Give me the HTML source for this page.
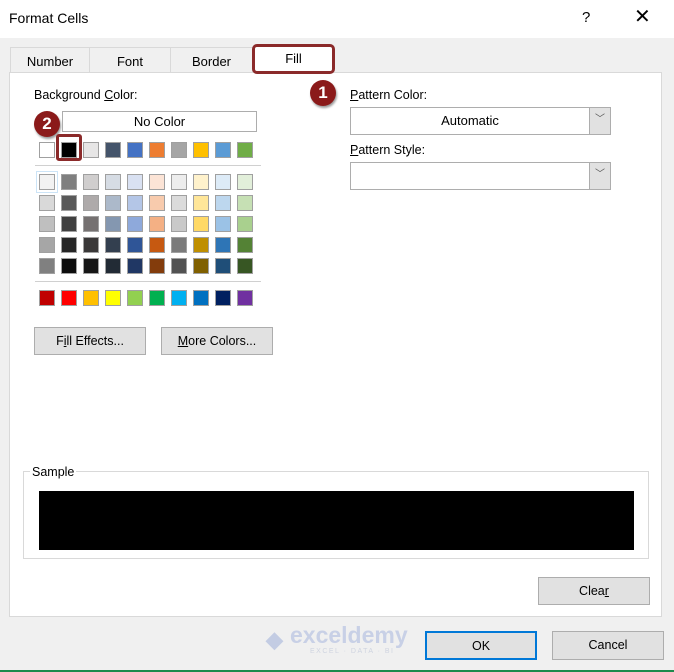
<!DOCTYPE html>
<html><head><style>
*{margin:0;padding:0;box-sizing:border-box}
body{width:674px;height:672px;background:#f0f0f0;font-family:"Liberation Sans",sans-serif;font-size:12.5px;color:#000;position:relative;overflow:hidden}
.a{position:absolute}
.sw{position:absolute;width:16px;height:16px;border:1px solid #a0a0a0}
.btn{position:absolute;background:#e1e1e1;border:1px solid #adadad;text-align:center;font-size:12.5px}
.badge{position:absolute;width:26px;height:26px;border-radius:50%;background:#8b1a1a;color:#fff;font-weight:bold;font-size:17px;text-align:center;line-height:26px;box-shadow:1px 2px 2px rgba(0,0,0,.4)}
u{text-decoration:underline}
</style></head><body>
<div class="a" style="left:0;top:0;width:674px;height:38px;background:#fff"></div>
<div class="a" style="left:9px;top:10px;font-size:14px">Format Cells</div>
<div class="a" style="left:582px;top:9px;font-size:15px">?</div>
<div class="a" style="left:634px;top:4px;font-size:20px;font-weight:300">✕</div>

<!-- tabs -->
<div class="a" style="left:10px;top:47px;width:80px;height:26px;border:1px solid #d9d9d9;border-bottom:none;text-align:center;line-height:27px;font-size:13px">Number</div>
<div class="a" style="left:89px;top:47px;width:82px;height:26px;border:1px solid #d9d9d9;border-bottom:none;text-align:center;line-height:27px;font-size:13px">Font</div>
<div class="a" style="left:170px;top:47px;width:83px;height:26px;border:1px solid #d9d9d9;border-bottom:none;text-align:center;line-height:27px;font-size:13px">Border</div>
<!-- panel -->
<div class="a" style="left:9px;top:72px;width:653px;height:545px;background:#fff;border:1px solid #d9d9d9"></div>
<div class="a" style="left:252px;top:44px;width:83px;height:30px;background:#fff;border:3px solid #8b2a2a;border-radius:5px;text-align:center;line-height:23px;font-size:13px">Fill</div>
<div class="badge" style="left:310px;top:80px">1</div>
<div class="badge" style="left:34px;top:111px">2</div>

<div class="a" style="left:34px;top:88px">Background <u>C</u>olor:</div>
<div class="a" style="left:62px;top:111px;width:195px;height:21px;border:1px solid #adadad;text-align:center;line-height:20px;font-size:13px">No Color</div>

<div class="a" style="left:35px;top:165px;width:226px;height:1px;background:#d0d0d0"></div>
<div class="a" style="left:35px;top:281px;width:226px;height:1px;background:#d0d0d0"></div>

<div id="g"></div>

<div class="a" style="left:350px;top:88px"><u>P</u>attern Color:</div>
<div class="a" style="left:350px;top:107px;width:261px;height:28px;border:1px solid #adadad;background:#fff"></div>
<div class="a" style="left:350px;top:107px;width:240px;height:28px;text-align:center;line-height:28px;font-size:13px">Automatic</div>
<div class="a" style="left:589px;top:108px;width:21px;height:26px;background:#e1e1e1;border-left:1px solid #adadad;text-align:center;line-height:24px;font-size:10px;color:#555">﹀</div>
<div class="a" style="left:350px;top:143px"><u>P</u>attern Style:</div>
<div class="a" style="left:350px;top:162px;width:261px;height:28px;border:1px solid #adadad;background:#fff"></div>
<div class="a" style="left:589px;top:163px;width:21px;height:26px;background:#e1e1e1;border-left:1px solid #adadad;text-align:center;line-height:24px;font-size:10px;color:#555">﹀</div>

<div class="btn" style="left:34px;top:327px;width:112px;height:28px;line-height:26px">F<u>i</u>ll Effects...</div>
<div class="btn" style="left:161px;top:327px;width:112px;height:28px;line-height:26px"><u>M</u>ore Colors...</div>

<div class="a" style="left:23px;top:471px;width:626px;height:88px;border:1px solid #d9d9d9"></div>
<div class="a" style="left:30px;top:465px;background:#fff;padding:0 2px">Sample</div>
<div class="a" style="left:39px;top:491px;width:595px;height:59px;background:#000"></div>

<div class="btn" style="left:538px;top:577px;width:112px;height:28px;line-height:27px">Clea<u>r</u></div>

<div class="a" style="left:266px;top:627px;color:#c3cce3;font-size:22px;font-weight:bold">&#9670;</div>
<div class="a" style="left:290px;top:622px;color:#c8d0e6;font-size:23px;font-weight:bold">exceldemy</div>
<div class="a" style="left:310px;top:648px;color:#cfd4e0;font-size:7px;letter-spacing:1.5px">EXCEL · DATA · BI</div>

<div class="btn" style="left:425px;top:631px;width:112px;height:29px;line-height:27px;border:2px solid #0078d7">OK</div>
<div class="btn" style="left:552px;top:631px;width:112px;height:29px;line-height:27px">Cancel</div>
<div class="a" style="left:0;top:670px;width:674px;height:2px;background:#1e8a4c"></div>

<script>
var r1=["#fff","#000","#e7e6e6","#44546a","#4472c4","#ed7d31","#a5a5a5","#ffc000","#5b9bd5","#70ad47"];
var g=[["#f2f2f2","#7f7f7f","#d0cece","#d6dce4","#d9e1f2","#fce4d6","#ededed","#fff2cc","#ddebf7","#e2efda"],
["#d9d9d9","#595959","#aeaaaa","#acb9ca","#b4c6e7","#f8cbad","#dbdbdb","#ffe699","#bdd7ee","#c6e0b4"],
["#bfbfbf","#404040","#757171","#8497b0","#8ea9db","#f4b084","#c9c9c9","#ffd966","#9bc2e6","#a9d08e"],
["#a6a6a6","#262626","#3a3838","#333f4f","#2f5597","#c65911","#7b7b7b","#bf8f00","#2e75b6","#548235"],
["#808080","#0d0d0d","#161616","#222b35","#203764","#833c0c","#525252","#806000","#1f4e78","#375623"]];
var st=["#c00000","#ff0000","#ffc000","#ffff00","#92d050","#00b050","#00b0f0","#0070c0","#002060","#7030a0"];
var h="";
function s(x,y,c){h+='<div class="sw" style="left:'+x+'px;top:'+y+'px;background:'+c+'"></div>';}
for(var i=0;i<10;i++){s(39+22*i,142,r1[i]);s(39+22*i,290,st[i]);for(var j=0;j<5;j++)s(39+22*i,174+21*j,g[j][i]);}
h+='<div class="a" style="left:56px;top:134px;width:26px;height:27px;border:3px solid #8b2a2a;border-radius:3px"></div>';
h+='<div class="a" style="left:36px;top:171px;width:22px;height:22px;border:1px solid #cce4f7"></div>';
document.getElementById("g").innerHTML=h;
</script>
</body></html>
